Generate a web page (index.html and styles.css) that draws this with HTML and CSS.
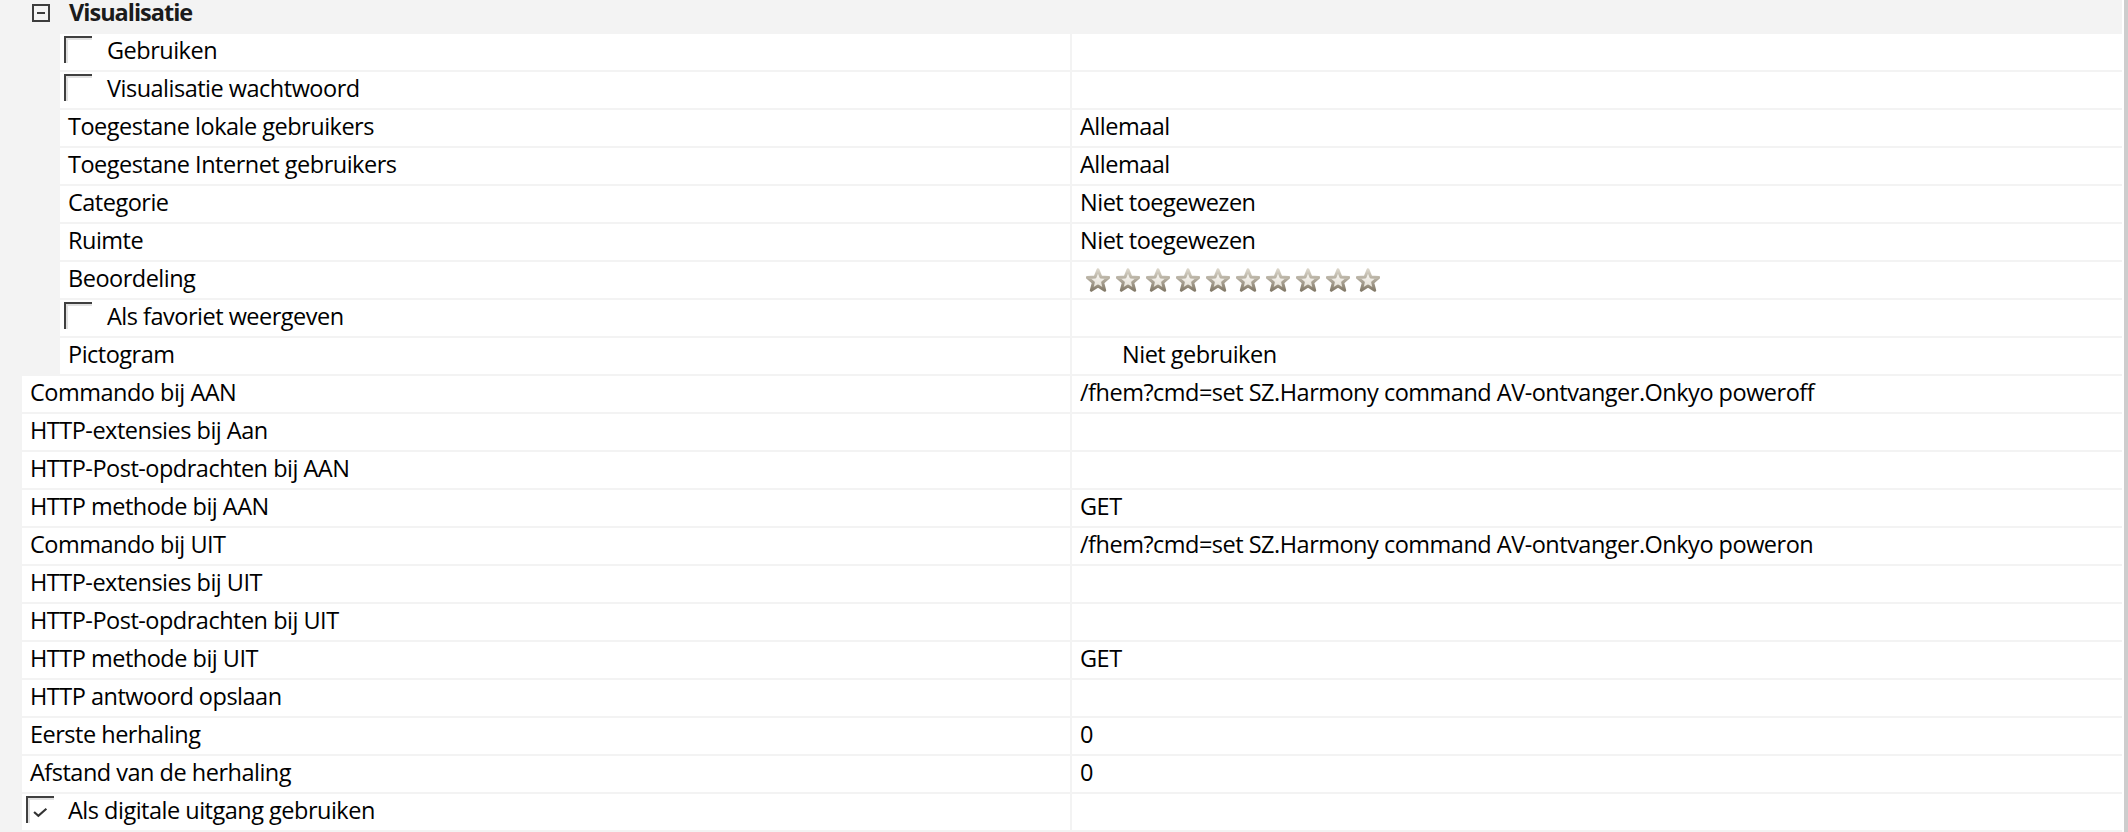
FILE: index.html
```html
<!DOCTYPE html>
<html lang="nl">
<head>
<meta charset="utf-8">
<title>Eigenschappen</title>
<link rel="stylesheet" href="styles.css">
</head>
<body>
<div class="page">
  <div class="grid">
    <div class="header">
      <span class="toggle"><span class="minus"></span></span>
      <span class="header-label">Visualisatie</span>
    </div>

    <div class="row lvl1">
      <div class="label has-check"><span class="check"></span><span>Gebruiken</span></div>
      <div class="value"></div>
    </div>
    <div class="row lvl1">
      <div class="label has-check"><span class="check"></span><span>Visualisatie wachtwoord</span></div>
      <div class="value"></div>
    </div>
    <div class="row lvl1">
      <div class="label">Toegestane lokale gebruikers</div>
      <div class="value">Allemaal</div>
    </div>
    <div class="row lvl1">
      <div class="label">Toegestane Internet gebruikers</div>
      <div class="value">Allemaal</div>
    </div>
    <div class="row lvl1">
      <div class="label">Categorie</div>
      <div class="value">Niet toegewezen</div>
    </div>
    <div class="row lvl1">
      <div class="label">Ruimte</div>
      <div class="value">Niet toegewezen</div>
    </div>
    <div class="row lvl1">
      <div class="label">Beoordeling</div>
      <div class="value stars">
        <svg class="star-defs" width="0" height="0" aria-hidden="true">
          <defs>
            <linearGradient id="sg" x1="0" y1="0" x2="0" y2="1">
              <stop offset="0" stop-color="#d9d4c8"/>
              <stop offset="1" stop-color="#857c6b"/>
            </linearGradient>
            <linearGradient id="sf" x1="0" y1="0" x2="0" y2="1">
              <stop offset="0" stop-color="#fbfaf7"/>
              <stop offset="1" stop-color="#e2ddd2"/>
            </linearGradient>
          </defs>
        </svg>
        <svg class="star" viewBox="0 0 24 24"><path d="M12 1.8 L14.9 9 L22.8 9.4 L16.7 14.5 L18.7 22.3 L12 18 L5.3 22.3 L7.3 14.5 L1.2 9.4 L9.1 9 Z"/></svg>
        <svg class="star" viewBox="0 0 24 24"><path d="M12 1.8 L14.9 9 L22.8 9.4 L16.7 14.5 L18.7 22.3 L12 18 L5.3 22.3 L7.3 14.5 L1.2 9.4 L9.1 9 Z"/></svg>
        <svg class="star" viewBox="0 0 24 24"><path d="M12 1.8 L14.9 9 L22.8 9.4 L16.7 14.5 L18.7 22.3 L12 18 L5.3 22.3 L7.3 14.5 L1.2 9.4 L9.1 9 Z"/></svg>
        <svg class="star" viewBox="0 0 24 24"><path d="M12 1.8 L14.9 9 L22.8 9.4 L16.7 14.5 L18.7 22.3 L12 18 L5.3 22.3 L7.3 14.5 L1.2 9.4 L9.1 9 Z"/></svg>
        <svg class="star" viewBox="0 0 24 24"><path d="M12 1.8 L14.9 9 L22.8 9.4 L16.7 14.5 L18.7 22.3 L12 18 L5.3 22.3 L7.3 14.5 L1.2 9.4 L9.1 9 Z"/></svg>
        <svg class="star" viewBox="0 0 24 24"><path d="M12 1.8 L14.9 9 L22.8 9.4 L16.7 14.5 L18.7 22.3 L12 18 L5.3 22.3 L7.3 14.5 L1.2 9.4 L9.1 9 Z"/></svg>
        <svg class="star" viewBox="0 0 24 24"><path d="M12 1.8 L14.9 9 L22.8 9.4 L16.7 14.5 L18.7 22.3 L12 18 L5.3 22.3 L7.3 14.5 L1.2 9.4 L9.1 9 Z"/></svg>
        <svg class="star" viewBox="0 0 24 24"><path d="M12 1.8 L14.9 9 L22.8 9.4 L16.7 14.5 L18.7 22.3 L12 18 L5.3 22.3 L7.3 14.5 L1.2 9.4 L9.1 9 Z"/></svg>
        <svg class="star" viewBox="0 0 24 24"><path d="M12 1.8 L14.9 9 L22.8 9.4 L16.7 14.5 L18.7 22.3 L12 18 L5.3 22.3 L7.3 14.5 L1.2 9.4 L9.1 9 Z"/></svg>
        <svg class="star" viewBox="0 0 24 24"><path d="M12 1.8 L14.9 9 L22.8 9.4 L16.7 14.5 L18.7 22.3 L12 18 L5.3 22.3 L7.3 14.5 L1.2 9.4 L9.1 9 Z"/></svg>
      </div>
    </div>
    <div class="row lvl1">
      <div class="label has-check"><span class="check"></span><span>Als favoriet weergeven</span></div>
      <div class="value"></div>
    </div>
    <div class="row lvl1">
      <div class="label">Pictogram</div>
      <div class="value icon-value">Niet gebruiken</div>
    </div>

    <div class="row lvl0">
      <div class="label">Commando bij AAN</div>
      <div class="value">/fhem?cmd=set SZ.Harmony command AV-ontvanger.Onkyo poweroff</div>
    </div>
    <div class="row lvl0">
      <div class="label">HTTP-extensies bij Aan</div>
      <div class="value"></div>
    </div>
    <div class="row lvl0">
      <div class="label">HTTP-Post-opdrachten bij AAN</div>
      <div class="value"></div>
    </div>
    <div class="row lvl0">
      <div class="label">HTTP methode bij AAN</div>
      <div class="value">GET</div>
    </div>
    <div class="row lvl0">
      <div class="label">Commando bij UIT</div>
      <div class="value">/fhem?cmd=set SZ.Harmony command AV-ontvanger.Onkyo poweron</div>
    </div>
    <div class="row lvl0">
      <div class="label">HTTP-extensies bij UIT</div>
      <div class="value"></div>
    </div>
    <div class="row lvl0">
      <div class="label">HTTP-Post-opdrachten bij UIT</div>
      <div class="value"></div>
    </div>
    <div class="row lvl0">
      <div class="label">HTTP methode bij UIT</div>
      <div class="value">GET</div>
    </div>
    <div class="row lvl0">
      <div class="label">HTTP antwoord opslaan</div>
      <div class="value"></div>
    </div>
    <div class="row lvl0">
      <div class="label">Eerste herhaling</div>
      <div class="value">0</div>
    </div>
    <div class="row lvl0">
      <div class="label">Afstand van de herhaling</div>
      <div class="value">0</div>
    </div>
    <div class="row lvl0">
      <div class="label has-check"><span class="check checked"><svg viewBox="0 0 14 10" class="tick"><path d="M1 4.5 L5 8 L12.5 1.5"/></svg></span><span>Als digitale uitgang gebruiken</span></div>
      <div class="value"></div>
    </div>
  </div>
  <div class="scroll-gap"></div>
  <div class="scrollbar"></div>
</div>
</body>
</html>
```

FILE: styles.css
```css
html, body {
  margin: 0;
  padding: 0;
}

body {
  width: 2128px;
  height: 832px;
  overflow: hidden;
  background: #f3f3f3;
  font-family: "Open Sans", "Noto Sans", "Liberation Sans", sans-serif;
  font-size: 23.5px;
  letter-spacing: -0.5px;
  color: #000;
}

.page {
  display: flex;
  height: 832px;
}

.grid {
  width: 2122px;
  display: flex;
  flex-direction: column;
  background: #f3f3f3;
}

.scroll-gap {
  width: 2px;
  background: #ffffff;
}

.scrollbar {
  width: 4px;
  background: #cdcdcd;
}

.header {
  height: 34px;
  display: flex;
  align-items: flex-start;
  background: #f3f3f3;
}

.toggle {
  margin: 4px 0 0 32px;
  width: 18px;
  height: 18px;
  box-sizing: border-box;
  border: 2px solid #3c3c3c;
  display: flex;
  align-items: center;
  justify-content: center;
}

.minus {
  width: 8px;
  height: 2px;
  background: #3c3c3c;
}

.header-label {
  margin-left: 19px;
  font-weight: 700;
  letter-spacing: -1px;
  line-height: 24px;
  color: #1b1b1b;
}

.row {
  height: 36px;
  margin-bottom: 2px;
  display: flex;
  gap: 2px;
  background: #f3f3f3;
}

.row.lvl1 {
  margin-left: 60px;
}

.row.lvl0 {
  margin-left: 22px;
}

.label,
.value {
  background: #ffffff;
  line-height: 32px;
  white-space: nowrap;
  overflow: hidden;
}

.label {
  flex: 1;
  padding-left: 8px;
}

.value {
  width: 1042px;
  flex: none;
  padding-left: 8px;
}

.label.has-check {
  display: flex;
  align-items: flex-start;
  padding-left: 4px;
}

.check {
  flex: none;
  width: 26px;
  height: 25px;
  margin-top: 2px;
  border-top: 2px solid #404040;
  border-left: 2px solid #404040;
  box-shadow: inset 2px 2px 0 #e2e2e2;
  display: flex;
  align-items: center;
  justify-content: center;
}

.lvl1 .has-check .check {
  margin-right: 15px;
}

.lvl0 .has-check .check {
  margin-right: 14px;
}

.tick {
  width: 15px;
  height: 11px;
  margin: 3px 2px 0 0;
}

.tick path {
  fill: none;
  stroke: #333333;
  stroke-width: 2;
}

.icon-value {
  padding-left: 50px;
  width: 1000px;
}

.stars {
  display: flex;
  align-items: flex-start;
  gap: 6px;
  padding-left: 14px;
  width: 1036px;
}

.star-defs {
  position: absolute;
  width: 0;
  height: 0;
}

.star {
  width: 24px;
  height: 24px;
  margin-top: 6px;
}

.star path {
  fill: url(#sf);
  stroke: url(#sg);
  stroke-width: 3;
  stroke-linejoin: round;
}
```
